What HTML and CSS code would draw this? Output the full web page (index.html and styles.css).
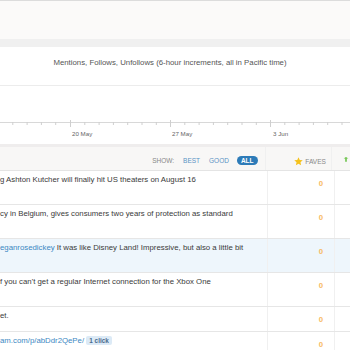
FILE: index.html
```html
<!DOCTYPE html>
<html lang="en">
<head>
    <meta charset="UTF-8">
    <meta name="viewport" content="width=device-width, initial-scale=1.0">
    <title>Mentions</title>
    <link rel="stylesheet" href="styles.css">
</head>
<body>
    <div class="top-bar"></div>
    <div class="band"></div>

    <div class="chart">
        <div class="chart-title">Mentions, Follows, Unfollows (6-hour increments, all in Pacific time)</div>
        <div class="plot"></div>
        <svg class="axis" width="350" height="22" viewBox="0 0 350 22">
            <line x1="0" y1="0.5" x2="350" y2="0.5" stroke="#d8d8d8" stroke-width="1"/>
            <g stroke="#cfcfcf" stroke-width="1">
                <line x1="-1.5" y1="0" x2="-1.5" y2="3"/>
                <line x1="12.8" y1="0" x2="12.8" y2="3"/>
                <line x1="27.1" y1="0" x2="27.1" y2="3"/>
                <line x1="41.4" y1="0" x2="41.4" y2="3"/>
                <line x1="55.7" y1="0" x2="55.7" y2="3"/>
                <line x1="70.5" y1="-2" x2="70.5" y2="5"/>
                <line x1="84.8" y1="0" x2="84.8" y2="3"/>
                <line x1="99.1" y1="0" x2="99.1" y2="3"/>
                <line x1="113.4" y1="0" x2="113.4" y2="3"/>
                <line x1="127.7" y1="0" x2="127.7" y2="3"/>
                <line x1="142" y1="0" x2="142" y2="3"/>
                <line x1="156.3" y1="0" x2="156.3" y2="3"/>
                <line x1="170.5" y1="-2" x2="170.5" y2="5"/>
                <line x1="184.8" y1="0" x2="184.8" y2="3"/>
                <line x1="199.1" y1="0" x2="199.1" y2="3"/>
                <line x1="213.4" y1="0" x2="213.4" y2="3"/>
                <line x1="227.7" y1="0" x2="227.7" y2="3"/>
                <line x1="242" y1="0" x2="242" y2="3"/>
                <line x1="256.3" y1="0" x2="256.3" y2="3"/>
                <line x1="270.5" y1="-2" x2="270.5" y2="5"/>
                <line x1="284.8" y1="0" x2="284.8" y2="3"/>
                <line x1="299.1" y1="0" x2="299.1" y2="3"/>
                <line x1="313.4" y1="0" x2="313.4" y2="3"/>
                <line x1="327.7" y1="0" x2="327.7" y2="3"/>
                <line x1="342" y1="0" x2="342" y2="3"/>
            </g>
            <g class="axis-label">
                <text x="72" y="14">20 May</text>
                <text x="172" y="14">27 May</text>
                <text x="273" y="14">3 Jun</text>
            </g>
        </svg>
    </div>

    <div class="band band-thin"></div>

    <div class="table">
        <div class="row head">
            <div class="cell tweet show">
                <span class="show-label">SHOW:</span>
                <span class="filter">BEST</span>
                <span class="filter">GOOD</span>
                <span class="filter active">ALL</span>
            </div>
            <div class="cell faves">
                <svg class="star" width="9" height="9" viewBox="0 0 10 10">
                    <path d="M5 0.4 L6.4 3.4 L9.7 3.7 L7.2 5.9 L7.9 9.2 L5 7.5 L2.1 9.2 L2.8 5.9 L0.3 3.7 L3.6 3.4 Z" fill="#f5c21c"/>
                </svg>
                FAVES
            </div>
            <div class="cell more">
                <svg width="8" height="8" viewBox="0 0 10 10">
                    <path d="M2 2 L5 0 L8 2 L6 2 L6 6 L4 6 L4 2 Z" fill="#6cc24a"/>
                </svg>
            </div>
        </div>

        <div class="row tall">
            <div class="cell tweet">g Ashton Kutcher will finally hit US theaters on August 16</div>
            <div class="cell faves"><span class="count">0</span></div>
            <div class="cell more"></div>
        </div>
        <div class="row tall">
            <div class="cell tweet">cy in Belgium, gives consumers two years of protection as standard</div>
            <div class="cell faves"><span class="count">0</span></div>
            <div class="cell more"></div>
        </div>
        <div class="row tall highlight">
            <div class="cell tweet"><a href="#">eganrosedickey</a> It was like Disney Land! Impressive, but also a little bit</div>
            <div class="cell faves"><span class="count">0</span></div>
            <div class="cell more"></div>
        </div>
        <div class="row tall">
            <div class="cell tweet">f you can't get a regular Internet connection for the Xbox One</div>
            <div class="cell faves"><span class="count">0</span></div>
            <div class="cell more"></div>
        </div>
        <div class="row">
            <div class="cell tweet">et.</div>
            <div class="cell faves"><span class="count">0</span></div>
            <div class="cell more"></div>
        </div>
        <div class="row">
            <div class="cell tweet"><a href="#">am.com/p/abDdr2QePe/</a> <span class="clicks">1 click</span></div>
            <div class="cell faves"><span class="count">0</span></div>
            <div class="cell more"></div>
        </div>
    </div>
</body>
</html>
```

FILE: styles.css
```css
* {
    margin: 0;
    padding: 0;
    box-sizing: border-box;
}

body {
    font-family: 'Liberation Sans', Arial, sans-serif;
    background: #fff;
    color: #3a3a3a;
    width: 350px;
    overflow: hidden;
}

.top-bar {
    height: 39px;
    background: #fbfaf9;
    border-top: 1px solid #dcdcdc;
}

.band {
    height: 8px;
    background: #f0f0f0;
}

.band-thin {
    height: 3px;
    background: #efeded;
}

.chart {
    height: 97px;
    background: #fff;
}

.chart-title {
    height: 39px;
    border-bottom: 1px solid #ececec;
    text-align: center;
    font-size: 7.8px;
    color: #555;
    padding-top: 11px;
    padding-right: 10px;
}

.plot {
    height: 36px;
}

.axis {
    display: block;
    overflow: visible;
}

.axis-label text {
    font-size: 6.2px;
    fill: #666;
    font-family: 'Liberation Sans', Arial, sans-serif;
}

.table {
    font-size: 7.8px;
}

.row {
    display: flex;
    height: 25px;
    border-bottom: 1px solid #e6e6e6;
}

.row.tall {
    height: 34px;
}

.row.highlight {
    background: #eef6fc;
}

.row.head {
    height: 24px;
    background: #f8f7f6;
    border-bottom: 1px solid #e4e4e4;
}

.cell {
    border-right: 1px solid #f0f0f0;
}

.cell.tweet {
    width: 268px;
    padding-top: 4px;
    white-space: nowrap;
    overflow: hidden;
}

.cell.faves {
    width: 67px;
    text-align: right;
    padding-right: 11px;
    padding-top: 8px;
}

.cell.more {
    flex: 1;
    border-right: none;
}

.tweet a {
    color: #3b88c3;
    text-decoration: none;
}

.count {
    color: #f7b962;
    font-weight: bold;
}

.show {
    display: flex;
    justify-content: flex-end;
    align-items: center;
    gap: 9px;
    padding: 5px 7px 0 0;
    font-size: 6.5px;
}

.show-label {
    color: #888;
}

.filter {
    color: #5a93c4;
}

.filter.active {
    background: #2d7bb8;
    color: #fff;
    font-weight: bold;
    padding: 1px 4px;
    border-radius: 6px;
    margin-left: -1px;
}

.head .faves {
    display: flex;
    align-items: center;
    justify-content: flex-end;
    gap: 2px;
    padding: 5px 5px 0 0;
    font-size: 6.6px;
    color: #888;
}

.head .more {
    display: flex;
    align-items: center;
    padding: 5px 0 0 10px;
}

.clicks {
    background: #dceaf6;
    color: #4a6b8c;
    font-weight: bold;
    padding: 1px 3px;
    border-radius: 2px;
    font-size: 6.4px;
}
```
